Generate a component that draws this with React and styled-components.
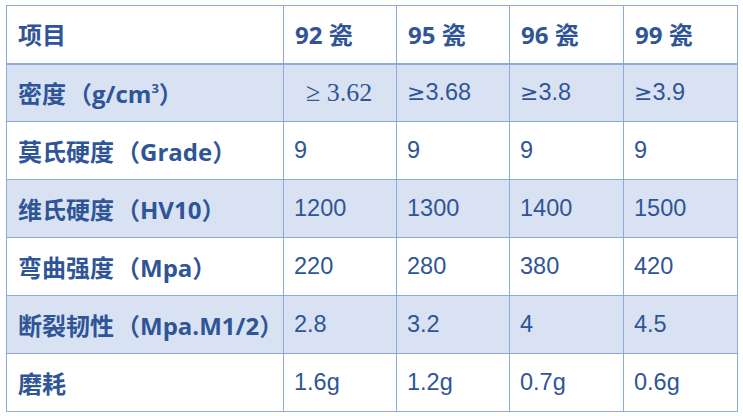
import React from 'react'
import styled, {createGlobalStyle} from 'styled-components'

const GlobalStyle = createGlobalStyle`
    html, body {
        margin: 0;
        padding: 0;
        background: #ffffff;
    }
`;

const Page = styled.div`
    padding: 5px 6px;
`;

const Table = styled.table`
    width: 731px;
    border-collapse: collapse;
    table-layout: fixed;
    font-family: "Liberation Sans", "Noto Sans CJK SC", sans-serif;
    font-size: 23.5px;
    color: #2f5597;
`;

const Col = styled.col`
    width: ${props => props.$w}px;
`;

const Row = styled.tr`
    height: 58px;
    background: ${props => props.$shaded ? '#d9e2f3' : '#ffffff'};
`;

const HeadCell = styled.th`
    border: 1px solid #8eaadb;
    border-bottom: 2px solid #8eaadb;
    padding: 0 0 2px 11px;
    text-align: left;
    font-family: "Open Sans", "Noto Sans CJK SC", sans-serif;
    font-size: 24px;
    font-weight: bold;
    white-space: nowrap;
`;

const LabelCell = styled.td`
    border: 1px solid #8eaadb;
    padding: 0 0 0 11px;
    font-family: "Open Sans", "Noto Sans CJK SC", sans-serif;
    font-size: 24px;
    font-weight: bold;
    white-space: nowrap;
`;

const Cell = styled.td`
    border: 1px solid #8eaadb;
    padding: 0 0 0 ${props => props.$serif ? '22px' : '10px'};
    white-space: nowrap;
    font-family: ${props => props.$serif ? '"Liberation Serif", serif' : 'inherit'};
    font-size: ${props => props.$serif ? '26px' : 'inherit'};
`;

const Sym = styled.span`
    font-family: "DejaVu Sans", sans-serif;
    font-size: 22px;
`;

const Paren = styled.span`
    margin-left: 2px;
`;

const Sup = styled.sup`
    font-size: 13px;
    vertical-align: 10px;
    line-height: 0;
`;

const widths = [277, 113, 113, 114, 114];

const headers = ['92 瓷', '95 瓷', '96 瓷', '99 瓷'];

const rows = [
    {name: '密度', unit: <>g/cm<Sup>3</Sup></>, values: ['3.62', '3.68', '3.8', '3.9'], ge: true},
    {name: '莫氏硬度', unit: 'Grade', values: ['9', '9', '9', '9']},
    {name: '维氏硬度', unit: 'HV10', values: ['1200', '1300', '1400', '1500']},
    {name: '弯曲强度', unit: 'Mpa', values: ['220', '280', '380', '420']},
    {name: '断裂韧性', unit: 'Mpa.M1/2', values: ['2.8', '3.2', '4', '4.5']},
    {name: '磨耗', values: ['1.6g', '1.2g', '0.7g', '0.6g']},
];

const App = () => {
    return (
        <Page>
            <GlobalStyle/>
            <Table>
                <colgroup>
                    {widths.map((w, i) => <Col key={i} $w={w}/>)}
                </colgroup>
                <thead>
                <Row>
                    <HeadCell>项目</HeadCell>
                    {headers.map(h => <HeadCell key={h}>{h}</HeadCell>)}
                </Row>
                </thead>
                <tbody>
                {rows.map((r, i) => (
                    <Row key={i} $shaded={i % 2 === 0}>
                        <LabelCell>
                            {r.name}
                            {r.unit && <><Paren>（</Paren>{r.unit}）</>}
                        </LabelCell>
                        {r.values.map((v, j) => {
                            const serif = r.ge && j === 0;
                            return (
                                <Cell key={j} $serif={serif}>
                                    {r.ge && (serif ? '≥ ' : <Sym>≥</Sym>)}{v}
                                </Cell>
                            );
                        })}
                    </Row>
                ))}
                </tbody>
            </Table>
        </Page>
    );
}

export default App;
